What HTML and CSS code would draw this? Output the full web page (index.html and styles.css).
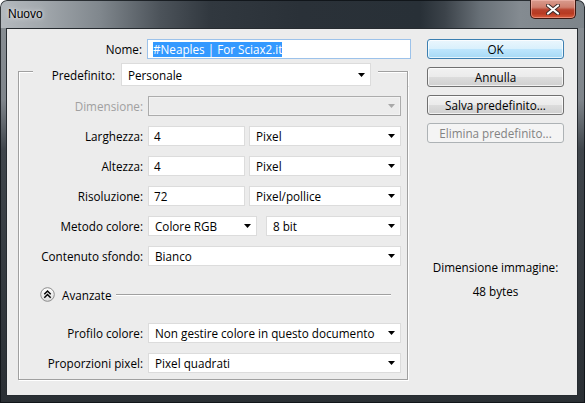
FILE: index.html
```html
<!DOCTYPE html>
<html lang="it">
<head>
<meta charset="utf-8">
<title>Nuovo</title>
<link rel="stylesheet" href="styles.css">
</head>
<body>
<div class="window">
  <div class="titlebar">
    <span class="title">Nuovo</span>
    <div class="close">
      <svg width="14" height="11" viewBox="0 0 14 11">
        <path d="M2 1.5 L12 9.5 M12 1.5 L2 9.5" stroke="#3a2a28" stroke-width="4" stroke-linecap="round"/>
        <path d="M2 1.5 L12 9.5 M12 1.5 L2 9.5" stroke="#ffffff" stroke-width="2.2" stroke-linecap="round"/>
      </svg>
    </div>
  </div>
  <div class="client">
    <div class="left">
      <div class="name-row">
        <span class="lbl">Nome:</span>
        <div class="field name-input"><span class="sel">#Neaples | For Sciax2.it</span></div>
      </div>
      <div class="group">
        <div class="group-head">
          <span class="edge edge-l"></span>
          <span class="head-lbl">Predefinito:</span>
          <div class="select preset"><span>Personale</span><svg class="arrow" width="7" height="4" viewBox="0 0 7 4"><polygon points="0,0 7,0 3.5,4" fill="#000"/></svg></div>
          <span class="edge edge-r"></span>
        </div>
        <div class="group-body">
          <div class="row">
            <span class="lbl dim">Dimensione:</span>
            <div class="select full disabled"><span></span><svg class="arrow" width="7" height="4" viewBox="0 0 7 4"><polygon points="0,0 7,0 3.5,4" fill="#a8a8a8"/></svg></div>
          </div>
          <div class="row">
            <span class="lbl">Larghezza:</span>
            <div class="field num">4</div>
            <div class="select unit"><span>Pixel</span><svg class="arrow" width="7" height="4" viewBox="0 0 7 4"><polygon points="0,0 7,0 3.5,4" fill="#000"/></svg></div>
          </div>
          <div class="row">
            <span class="lbl">Altezza:</span>
            <div class="field num">4</div>
            <div class="select unit"><span>Pixel</span><svg class="arrow" width="7" height="4" viewBox="0 0 7 4"><polygon points="0,0 7,0 3.5,4" fill="#000"/></svg></div>
          </div>
          <div class="row">
            <span class="lbl">Risoluzione:</span>
            <div class="field num">72</div>
            <div class="select unit"><span>Pixel/pollice</span><svg class="arrow" width="7" height="4" viewBox="0 0 7 4"><polygon points="0,0 7,0 3.5,4" fill="#000"/></svg></div>
          </div>
          <div class="row">
            <span class="lbl">Metodo colore:</span>
            <div class="select mode"><span>Colore RGB</span><svg class="arrow" width="7" height="4" viewBox="0 0 7 4"><polygon points="0,0 7,0 3.5,4" fill="#000"/></svg></div>
            <div class="select bits"><span>8 bit</span><svg class="arrow" width="7" height="4" viewBox="0 0 7 4"><polygon points="0,0 7,0 3.5,4" fill="#000"/></svg></div>
          </div>
          <div class="row">
            <span class="lbl">Contenuto sfondo:</span>
            <div class="select full"><span>Bianco</span><svg class="arrow" width="7" height="4" viewBox="0 0 7 4"><polygon points="0,0 7,0 3.5,4" fill="#000"/></svg></div>
          </div>
          <div class="adv">
            <svg class="adv-icon" width="15" height="15" viewBox="0 0 15 15">
              <defs>
                <linearGradient id="g" x1="0" y1="0" x2="0" y2="1">
                  <stop offset="0" stop-color="#ffffff"/>
                  <stop offset="1" stop-color="#dcdcdc"/>
                </linearGradient>
              </defs>
              <circle cx="7.5" cy="7.5" r="6.8" fill="url(#g)" stroke="#8c8c8c" stroke-width="1"/>
              <polyline points="4.3,7.2 7.5,4 10.7,7.2" fill="none" stroke="#000" stroke-width="1.5"/>
              <polyline points="4.3,10.7 7.5,7.5 10.7,10.7" fill="none" stroke="#000" stroke-width="1.5"/>
            </svg>
            <span class="adv-text">Avanzate</span>
            <span class="adv-line"></span>
          </div>
          <div class="row">
            <span class="lbl">Profilo colore:</span>
            <div class="select full"><span>Non gestire colore in questo documento</span><svg class="arrow" width="7" height="4" viewBox="0 0 7 4"><polygon points="0,0 7,0 3.5,4" fill="#000"/></svg></div>
          </div>
          <div class="row">
            <span class="lbl">Proporzioni pixel:</span>
            <div class="select full"><span>Pixel quadrati</span><svg class="arrow" width="7" height="4" viewBox="0 0 7 4"><polygon points="0,0 7,0 3.5,4" fill="#000"/></svg></div>
          </div>
        </div>
      </div>
    </div>
    <div class="right">
      <div class="buttons">
        <div class="btn ok">OK</div>
        <div class="btn">Annulla</div>
        <div class="btn">Salva predefinito...</div>
        <div class="btn disabled">Elimina predefinito...</div>
      </div>
      <div class="info">
        <div class="info-line">Dimensione immagine:</div>
        <div class="info-line">48 bytes</div>
      </div>
    </div>
  </div>
</div>
</body>
</html>
```

FILE: styles.css
```css
* { box-sizing: border-box; }
html, body { margin: 0; padding: 0; background: #ffffff; }
body {
  font-family: "Open Sans", "Liberation Sans", sans-serif;
  font-size: 11.7px;
  color: #000;
}

.window {
  width: 585px;
  height: 403px;
  display: flex;
  flex-direction: column;
  padding: 0 7px 7px 6px;
  border-radius: 7px 7px 0 0;
  background:
    linear-gradient(90deg, #b4b9be 0, #a3a9ae 40px, #80878d 100px, #4c535a 160px, #31383f 210px, #2a3138 300px, #283037 420px, #3c434a 445px, #687077 480px, #848b91 520px, #7d848a 585px) 0 0 / 100% 28px no-repeat,
    linear-gradient(180deg, #8a9095 0, #7f858b 100px, #3f454b 150px, #2a2f34 403px);
  box-shadow: inset 0 0 0 1px rgba(10, 14, 18, 0.75);
}

.titlebar {
  height: 28px;
  flex: none;
  display: flex;
  justify-content: space-between;
  align-items: flex-start;
}
.title {
  font-family: "Liberation Sans", sans-serif;
  font-size: 12px;
  line-height: 28px;
  padding-left: 2px;
  color: #000;
  text-shadow: 0 0 6px rgba(255, 255, 255, 0.8), 0 0 3px rgba(255, 255, 255, 0.6);
}
.close {
  width: 46px;
  height: 19px;
  margin-right: 2px;
  border: 1px solid #3b1711;
  border-top: none;
  border-radius: 0 0 5px 5px;
  background: linear-gradient(180deg, #d89b8e 0, #cf7f6e 40%, #b7412c 55%, #b83a22 75%, #d85c3c 100%);
  box-shadow: inset 0 0 0 1px rgba(255, 200, 190, 0.45);
  display: flex;
  align-items: center;
  justify-content: center;
}

.client {
  flex: 1;
  background: #ececec;
  border: 1px solid #262b30;
  display: flex;
  padding: 10px 12px 0 11px;
  gap: 16px;
}

.left {
  width: 393px;
  flex: none;
  display: flex;
  flex-direction: column;
}

.name-row {
  display: flex;
  align-items: center;
  height: 20px;
}
.lbl {
  width: 124px;
  flex: none;
  text-align: right;
  margin-right: 5px;
  white-space: nowrap;
}
.lbl.dim { color: #a0a0a0; }

.field, .select {
  height: 20px;
  background: #ffffff;
  border: 1px solid #dcdcdc;
  display: flex;
  align-items: center;
  white-space: nowrap;
}
.field { padding-left: 5px; }
.select {
  padding: 0 5px 0 6px;
  justify-content: space-between;
}
.arrow { flex: none; }

.name-input {
  width: 264px;
  border-color: #9cc2ea;
}
.sel {
  background: #3399ff;
  color: #ffffff;
  line-height: 15px;
}

.group {
  margin-top: 4px;
  width: 390px;
}
.group-head {
  display: flex;
  align-items: center;
  height: 23px;
}
.edge {
  align-self: stretch;
  margin-top: 8px;
  border-top: 1px solid #a0a0a0;
}
.edge-l {
  width: 15px;
  flex: none;
  border-left: 1px solid #a0a0a0;
  box-shadow: inset 1px 1px 0 #ffffff;
}
.edge-r {
  flex: 1;
  margin-left: 7px;
  border-right: 1px solid #a0a0a0;
  box-shadow: inset 0 1px 0 #ffffff, 1px 0 0 #ffffff;
}
.head-lbl {
  width: 82px;
  flex: none;
  text-align: right;
  margin-right: 6px;
}
.select.preset {
  width: 250px;
  height: 23px;
  flex: none;
}

.group-body {
  border: 1px solid #a0a0a0;
  border-top: none;
  box-shadow: inset 1px 0 0 #ffffff, 1px 1px 0 #ffffff;
  padding: 10px 0 6px 0;
  display: flex;
  flex-direction: column;
  gap: 10px;
}
.row {
  display: flex;
  align-items: center;
  height: 20px;
}
.field.num { width: 97px; margin-right: 4px; }
.select.unit { width: 152px; }
.select.full { width: 253px; }
.select.mode { width: 109px; margin-right: 9px; }
.select.bits { width: 135px; }
.select.disabled {
  background: #ececec;
  border-color: #acacac;
  box-shadow: inset 0 0 0 1px #f2f2f2;
}

.adv {
  display: flex;
  align-items: center;
  height: 15px;
  margin-top: 11px;
  margin-bottom: 11px;
  padding-left: 21px;
}
.adv-icon { flex: none; margin-right: 7px; }
.adv-text { white-space: nowrap; }
.adv-line {
  flex: 1;
  height: 2px;
  margin-left: 4px;
  margin-right: 16px;
  border-top: 1px solid #a0a0a0;
  border-bottom: 1px solid #ffffff;
}

.right {
  width: 137px;
  flex: none;
  display: flex;
  flex-direction: column;
}
.buttons {
  display: flex;
  flex-direction: column;
  gap: 8px;
}
.btn {
  height: 20px;
  border: 1px solid #707070;
  border-radius: 3px;
  background: linear-gradient(180deg, #f2f2f2 0, #ebebeb 50%, #dddddd 50%, #cfcfcf 100%);
  box-shadow: inset 0 0 0 1px rgba(255, 255, 255, 0.7);
  display: flex;
  align-items: center;
  justify-content: center;
  white-space: nowrap;
}
.btn.ok {
  border-color: #3c7fb1;
  background: linear-gradient(180deg, #eaf6fd 0, #d9f0fc 50%, #bee6fd 50%, #a7d9f5 100%);
}
.btn.disabled {
  border-color: #adb2b5;
  background: #f4f4f4;
  box-shadow: none;
  color: #838383;
}
.info {
  margin-top: 116px;
  text-align: center;
}
.info-line {
  line-height: 16px;
  margin-bottom: 8px;
}
```
